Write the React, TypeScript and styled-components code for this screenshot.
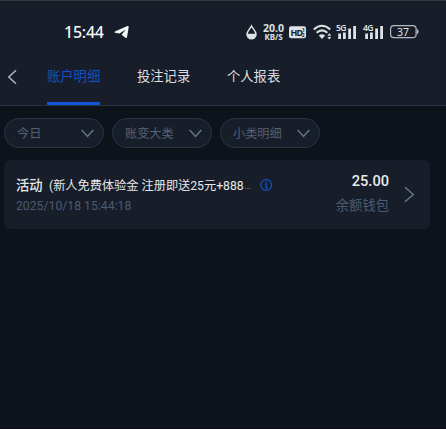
import React from 'react';
import styled, { createGlobalStyle } from 'styled-components';

const GlobalStyle = createGlobalStyle`
  * { box-sizing: border-box; }
  body {
    margin: 0;
    background: #0e131b;
    font-family: Roboto, "Noto Sans CJK SC", sans-serif;
  }
`;

const Screen = styled.main`
  width: 446px;
  height: 429px;
  overflow: hidden;
  background: #0e131b;
  border-bottom: 1px solid #0d0b17;
`;

const Header = styled.header`
  height: 106px;
  background: #171e29;
  border-top: 1px solid #35373b;
  border-bottom: 1px solid #283143;
`;

const StatusBar = styled.div`
  height: 48px;
  padding: 14px 27px 0 64px;
  display: flex;
  justify-content: space-between;
  color: #dfe2e5;
`;

const StatusGroup = styled.div`
  height: 34px;
  display: flex;
  align-items: center;
`;

const Clock = styled.span`
  width: 50px;
  font: 500 16px/20px "Noto Sans", sans-serif;
  letter-spacing: -0.25px;
  color: #f4f5f6;
`;

const StatusIcon = styled.svg<{ $gap?: number }>`
  display: block;
  flex: none;
  margin-left: ${({ $gap = 0 }) => $gap}px;
  overflow: visible;
`;

const Speed = styled.div`
  width: 23px;
  margin-left: 5px;
  display: flex;
  flex-direction: column;
  align-items: center;
  font: 700 10.5px/9px "Noto Sans", sans-serif;
  white-space: nowrap;
`;

const SpeedUnit = styled.span`
  font-size: 8px;
  line-height: 7px;
  letter-spacing: -0.1px;
`;

const Nav = styled.nav`
  height: 56px;
  padding-left: 6px;
  display: flex;
`;

const BackButton = styled.button`
  width: 12px;
  height: 56px;
  padding: 2px 0 0;
  border: 0;
  background: none;
  color: #a9b4c7;
`;

const TabList = styled.div`
  display: flex;
  gap: 37px;
  margin-left: 29px;
`;

const Tab = styled.button<{ $active?: boolean }>`
  width: 53px;
  height: 56px;
  padding: 1px 0 0;
  border: 0;
  border-bottom: 3px solid ${({ $active }) => ($active ? '#1255d5' : 'transparent')};
  border-radius: 1px;
  background: none;
  color: ${({ $active }) => ($active ? '#1252c6' : '#dcdee2')};
  font: 400 13.3px/20px "Noto Sans CJK SC", sans-serif;
  white-space: nowrap;
  display: flex;
  align-items: center;
`;

const Filters = styled.div`
  display: flex;
  gap: 8px;
  padding: 12px 4px;
`;

const Filter = styled.button`
  width: 100px;
  height: 30px;
  padding: 0 9px 0 12px;
  border: 1px solid #2a3446;
  border-radius: 15px;
  background: #171e29;
  color: #536179;
  font: 400 12.2px/18px "Noto Sans CJK SC", sans-serif;
  display: flex;
  align-items: center;
  justify-content: space-between;
`;

const Card = styled.article`
  width: 426px;
  height: 69px;
  margin-left: 4px;
  padding: 0 15px 0 12px;
  border-radius: 6px;
  background: #171e29;
  display: flex;
`;

const Details = styled.div`
  flex: 1;
  padding-top: 15px;
`;

const TitleRow = styled.div`
  height: 20px;
  display: flex;
  align-items: center;
  color: #e6e7ea;
  white-space: nowrap;
`;

const Category = styled.strong`
  width: 33px;
  font: 500 13.3px/20px "Noto Sans CJK SC", sans-serif;
`;

const Description = styled.span`
  width: 195px;
  padding-top: 1px;
  font-size: 12.2px;
  line-height: 20px;
`;

const Ellipsis = styled.span`
  width: 16px;
  color: #6b717c;
  font-size: 11px;
`;

const DateText = styled.time`
  display: block;
  margin-top: 3px;
  color: #4c5a72;
  font-size: 12.2px;
  line-height: 16px;
  letter-spacing: 0.02px;
`;

const Amount = styled.div`
  padding: 11px 0 0;
  text-align: right;
  color: #e9eaec;
  font-size: 14.6px;
  font-weight: 500;
  line-height: 20px;
`;

const Wallet = styled.div`
  margin-top: 4px;
  color: #4c5a72;
  font: 400 13.3px/20px "Noto Sans CJK SC", sans-serif;
`;

const RowArrow = styled.svg`
  align-self: center;
  margin-left: 15px;
`;

function Signal({ label, gap }: { label: string; gap: number }) {
  return (
    <StatusIcon $gap={gap} width="20" height="16" viewBox="0 0 20 16" fill="currentColor">
      <text x="-1" y="7" fontFamily="Noto Sans" fontWeight="600" fontSize="8.5" letterSpacing="-0.5">{label}</text>
      <rect x="1.2" y="9.5" width="2.8" height="5.5" />
      <rect x="6" y="8.5" width="2.8" height="6.5" />
      <rect x="11.2" y="4.5" width="2.8" height="10.5" />
      <rect x="16.2" y="2" width="2.8" height="13" />
    </StatusIcon>
  );
}

function Dropdown({ label }: { label: string }) {
  return (
    <Filter>
      {label}
      <svg width="13" height="9" viewBox="0 0 13 9" fill="none" stroke="#65748b" strokeWidth="1.5">
        <path d="M.7 1 6.5 7.4 12.3 1" />
      </svg>
    </Filter>
  );
}

export default function App() {
  return (
    <>
      <GlobalStyle />
      <Screen>
        <Header>
          <StatusBar>
            <StatusGroup>
              <Clock>15:44</Clock>
              <StatusIcon width="15" height="14" viewBox="0 0 15 14" fill="#f4f5f6">
                <path d="M.5 7.1Q.8 6.5 2 6L13.5 1.1Q14.8.7 14.7 2L13 12.3Q12.6 13.5 11.4 12.7L7.6 9.8 11.7 4.5 5.5 8.5 1 7.7Q.5 7.5.5 7.1Z" />
              </StatusIcon>
            </StatusGroup>
            <StatusGroup>
              <StatusIcon width="11" height="15" viewBox="0 0 11 15">
                <path d="M5.5 1C4.2 3.5 1 6.2 1 9.2a4.5 4.5 0 0 0 9 0C10 6.2 6.8 3.5 5.5 1Z" fill="none" stroke="currentColor" strokeWidth="1.5" />
                <path d="M1 8.8H10A4.5 4.8 0 0 1 1 8.8Z" fill="currentColor" />
              </StatusIcon>
              <Speed>20.0<SpeedUnit>KB/S</SpeedUnit></Speed>
              <StatusIcon $gap={4} width="17" height="13" viewBox="0 0 17 13">
                <rect y=".2" width="17" height="12" rx="2" fill="currentColor" />
                <g fill="#171e29" fontFamily="Noto Sans" fontWeight="700">
                  <text x="1.5" y="9.6" fontSize="9" letterSpacing="-.9">HD</text>
                  <text x="13" y="5.9" fontSize="5">1</text>
                  <text x="12.8" y="11" fontSize="5">2</text>
                </g>
              </StatusIcon>
              <StatusIcon $gap={7} width="20" height="16" viewBox="0 0 20 16" fill="none" stroke="currentColor" strokeWidth="2">
                <path d="M.8 5.4Q9 -2 17.2 5.4M3.6 8.8Q9 4 14.4 8.8" />
                <path d="m5.8 11.4 3.2 3.6 3.2-3.6Q9 9 5.8 11.4Z" fill="currentColor" stroke="none" />
                <path d="m14.3 11.7 2-2.4 2 2.4ZM14.3 13l2 2.4 2-2.4Z" fill="currentColor" stroke="none" />
              </StatusIcon>
              <Signal label="5G" gap={4} />
              <Signal label="4G" gap={7} />
              <StatusIcon $gap={6} width="29" height="14" viewBox="0 0 29 14">
                <rect x=".6" y=".6" width="25.5" height="12" rx="3.2" fill="none" stroke="#b5bac1" strokeWidth="1.2" />
                <path d="M27.4 4.5Q29 6.6 27.4 8.8Z" fill="#b5bac1" stroke="#b5bac1" />
                <text x="13.1" y="10.5" textAnchor="middle" fill="currentColor" fontFamily="Noto Sans" fontSize="10.5">37</text>
              </StatusIcon>
            </StatusGroup>
          </StatusBar>
          <Nav>
            <BackButton aria-label="返回">
              <svg width="10" height="16" viewBox="0 0 10 16" fill="none" stroke="currentColor" strokeWidth="1.5">
                <path d="M9 1.3 1.8 8 9 14.7" />
              </svg>
            </BackButton>
            <TabList>
              <Tab $active>账户明细</Tab>
              <Tab>投注记录</Tab>
              <Tab>个人报表</Tab>
            </TabList>
          </Nav>
        </Header>
        <Filters>
          <Dropdown label="今日" />
          <Dropdown label="账变大类" />
          <Dropdown label="小类明细" />
        </Filters>
        <Card>
          <Details>
            <TitleRow>
              <Category>活动</Category>
              <Description>(新人免费体验金 注册即送25元+888</Description>
              <Ellipsis>…</Ellipsis>
              <svg width="13" height="13" viewBox="0 0 13 13" fill="none" stroke="#1252c6" strokeWidth="1.2">
                <circle cx="6.2" cy="6" r="5.4" />
                <path d="M5 5.2h1.4v3.7M4.9 8.9h3" />
                <circle cx="6.2" cy="3.3" r=".8" fill="#1252c6" stroke="none" />
              </svg>
            </TitleRow>
            <DateText>2025/10/18 15:44:18</DateText>
          </Details>
          <Amount>
            25.00
            <Wallet>余额钱包</Wallet>
          </Amount>
          <RowArrow width="11" height="17" viewBox="0 0 11 17" fill="none" stroke="#65748b" strokeWidth="1.5">
            <path d="m1 1.2 8.3 7.3L1 15.8" />
          </RowArrow>
        </Card>
      </Screen>
    </>
  );
}
